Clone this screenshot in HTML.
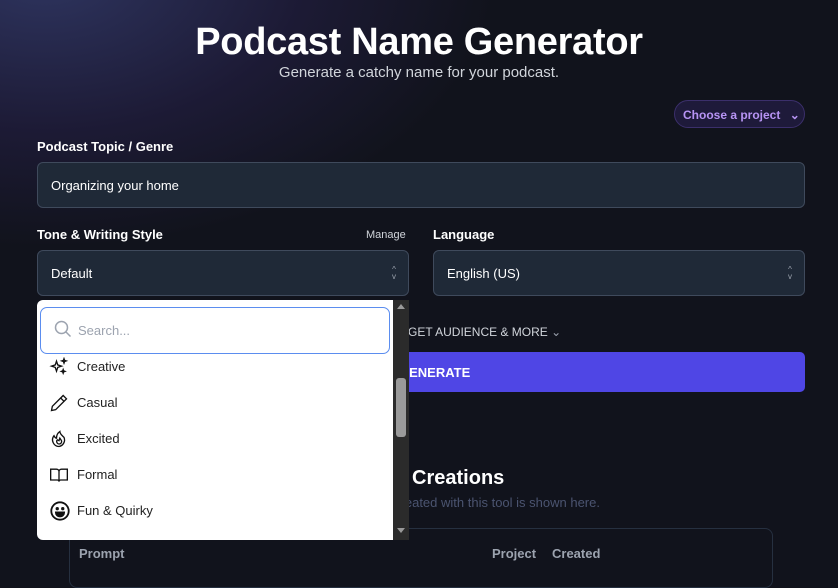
<!DOCTYPE html>
<html><head><meta charset="utf-8"><style>
*{box-sizing:border-box;margin:0;padding:0}
body{width:838px;height:575px;overflow:hidden;background:#11131c;font-family:"Liberation Sans",sans-serif;color:#fff;position:relative}
.glow{position:absolute;left:-200px;top:-250px;width:700px;height:500px;background:radial-gradient(ellipse at 35% 45%,rgba(70,80,150,.55),rgba(50,40,100,.35) 40%,rgba(17,19,28,0) 70%)}
.a{position:absolute}
h1{position:absolute;left:0;width:838px;top:21px;text-align:center;font-size:38px;font-weight:900;letter-spacing:-.3px}
.sub{left:0;width:838px;top:64px;text-align:center;font-size:15px;color:#d1d5db}
.pill{left:674px;top:100px;width:131px;height:28px;border:1px solid #3b2f6b;background:#1e1a3a;border-radius:14px;color:#b794f4;font-size:12px;font-weight:bold;padding:7px 0 0 8px}
.lbl{font-size:13px;font-weight:bold}
.box{background:#1f2937;border:1px solid #3f4a5c;border-radius:6px;font-size:13px;padding-left:13px;display:flex;align-items:center}
.arr{position:absolute;right:12px;top:15px;font-size:8px;line-height:7px;color:#9ca3af;text-align:center}
.dd{left:37px;top:300px;width:356px;height:240px;background:#fff;border-radius:6px 0 0 6px;overflow:hidden}
.sb{left:393px;top:300px;width:16px;height:240px;background:#2b2b2b}
.it{position:absolute;left:40px;font-size:13px;color:#222}
.ic{position:absolute;left:12px}
</style></head><body>
<div class="glow"></div>
<h1>Podcast Name Generator</h1>
<div class="a sub">Generate a catchy name for your podcast.</div>
<div class="a pill">Choose a project <span style="margin-left:6px">&#8964;</span></div>
<div class="a lbl" style="left:37px;top:139px">Podcast Topic / Genre</div>
<div class="a box" style="left:37px;top:162px;width:768px;height:46px">Organizing your home</div>
<div class="a lbl" style="left:37px;top:227px">Tone &amp; Writing Style</div>
<div class="a" style="left:366px;top:229px;font-size:11px;color:#d1d5db">Manage</div>
<div class="a lbl" style="left:433px;top:227px">Language</div>
<div class="a box" style="left:37px;top:250px;width:372px;height:46px">Default<div class="arr">^<br>v</div></div>
<div class="a box" style="left:433px;top:250px;width:372px;height:46px">English (US)<div class="arr">^<br>v</div></div>
<div class="a" style="left:408px;top:325px;font-size:12px;color:#d1d5db">GET AUDIENCE &amp; MORE <span style="color:#9ca3af">&#8964;</span></div>
<div class="a" style="left:300px;top:352px;width:505px;height:40px;background:#4f46e5;border-radius:5px;font-size:13px;font-weight:bold;padding:13px 0 0 99px">GENERATE</div>
<div class="a" style="left:322px;top:467px;font-size:20px;font-weight:bold">Previous Creations</div>
<div class="a" style="left:329px;top:495px;font-size:13px;color:#4b5470">Everything created with this tool is shown here.</div>
<div class="a" style="left:69px;top:528px;width:704px;height:60px;border:1px solid #263040;border-radius:8px"></div>
<div class="a" style="left:79px;top:546px;font-size:13px;font-weight:bold;color:#9ca3af">Prompt</div>
<div class="a" style="left:492px;top:546px;font-size:13px;font-weight:bold;color:#9ca3af">Project</div>
<div class="a" style="left:552px;top:546px;font-size:13px;font-weight:bold;color:#9ca3af">Created</div>
<div class="a dd">
<div class="a" style="left:3px;top:7px;width:350px;height:47px;border:1.5px solid #5b8def;border-radius:7px;background:#fff"></div>
<svg class="a" style="left:16px;top:19px" width="20" height="20" viewBox="0 0 20 20" fill="none" stroke="#9ca3af" stroke-width="1.5"><circle cx="8.5" cy="8.5" r="6"/><path d="M13 13l4.5 4.5"/></svg>
<div class="a" style="left:41px;top:23px;font-size:13px;color:#9ca3af">Search...</div>
<div class="it" style="top:59px">Creative</div>
<svg class="ic" style="top:57px" width="20" height="20" viewBox="0 0 24 24" fill="none" stroke="#111" stroke-width="1.6"><path d="M9 5l1.5 4.5L15 11l-4.5 1.5L9 17l-1.5-4.5L3 11l4.5-1.5z"/><path d="M18 2l.7 2 2 .7-2 .7-.7 2-.7-2-2-.7 2-.7zM17 15l.6 1.6 1.6.6-1.6.6-.6 1.6-.6-1.6-1.6-.6 1.6-.6z"/></svg>
<div class="it" style="top:95px">Casual</div>
<svg class="ic" style="top:93px" width="20" height="20" viewBox="0 0 24 24" fill="none" stroke="#111" stroke-width="1.6"><path d="M17 3l4 4L8 20l-5 1 1-5z"/><path d="M14 6l4 4"/></svg>
<div class="it" style="top:131px">Excited</div>
<svg class="ic" style="top:129px" width="20" height="20" viewBox="0 0 24 24" fill="none" stroke="#111" stroke-width="1.6"><path d="M12 21a8 8 0 01-6-13c1 2 2 3 3 3 0-3 1-6 4-8 0 3 3 5 5 7a8 8 0 01-6 11z"/><path d="M12 18a3 3 0 01-2-5l2 1 1-3 2 3a3 3 0 01-3 4z"/></svg>
<div class="it" style="top:167px">Formal</div>
<svg class="ic" style="top:165px" width="20" height="20" viewBox="0 0 24 24" fill="none" stroke="#111" stroke-width="1.6"><path d="M2 5h7a3 3 0 013 3v12a2 2 0 00-2-2H2zM22 5h-7a3 3 0 00-3 3v12a2 2 0 012-2h8z"/></svg>
<div class="it" style="top:203px">Fun &amp; Quirky</div>
<svg class="ic" style="top:200px" width="22" height="22" viewBox="0 0 24 24" fill="none" stroke="#111" stroke-width="2"><circle cx="12" cy="12" r="9.5"/><circle cx="9" cy="9.5" r=".8" fill="#111"/><circle cx="15" cy="9.5" r=".8" fill="#111"/><path d="M7.5 13.5h9a4.5 4.5 0 01-9 0z" fill="#111"/></svg>
</div>
<div class="a sb">
<div class="a" style="left:4px;top:4px;width:0;height:0;border:4px solid transparent;border-bottom:5px solid #999;border-top:0"></div>
<div class="a" style="left:3px;top:78px;width:10px;height:59px;background:#9a9a9a;border-radius:3px"></div>
<div class="a" style="left:4px;top:228px;width:0;height:0;border:4px solid transparent;border-top:5px solid #999;border-bottom:0"></div>
</div>
</body></html>
